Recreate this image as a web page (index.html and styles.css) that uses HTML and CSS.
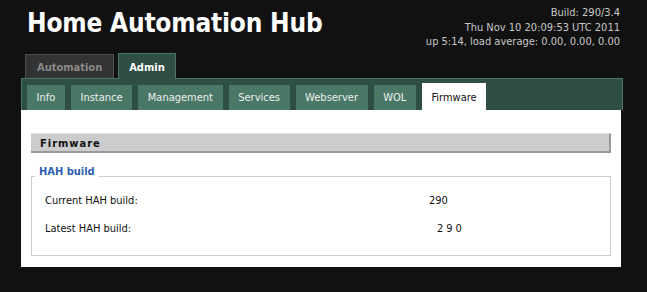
FILE: index.html
```html
<!DOCTYPE html>
<html>
<head>
<meta charset="utf-8">
<title>Home Automation Hub</title>
<link rel="stylesheet" href="styles.css">
</head>
<body>
<div class="wrap">
  <header class="header">
    <h1 class="title">Home Automation Hub</h1>
    <div class="info">
      <div>Build: 290/3.4</div>
      <div>Thu Nov 10 20:09:53 UTC 2011</div>
      <div>up 5:14, load average: 0.00, 0.00, 0.00</div>
    </div>
  </header>
  <nav class="tabs">
    <span class="tab">Automation</span>
    <span class="tab tab-active">Admin</span>
  </nav>
  <div class="subbar">
    <span class="subtab">Info</span>
    <span class="subtab">Instance</span>
    <span class="subtab">Management</span>
    <span class="subtab">Services</span>
    <span class="subtab">Webserver</span>
    <span class="subtab">WOL</span>
    <span class="subtab subtab-active">Firmware</span>
  </div>
  <main class="content">
    <div class="section-head">Firmware</div>
    <fieldset class="group">
      <legend class="group-title">HAH build</legend>
      <div class="row"><span class="label">Current HAH build:</span><span class="value">290</span></div>
      <div class="row"><span class="label">Latest HAH build:</span><span class="value value-latest">290</span></div>
    </fieldset>
  </main>
</div>
</body>
</html>
```
FILE: styles.css
```css
html, body {
  margin: 0;
  background: #111111;
}
body {
  font-family: "DejaVu Sans Condensed", "DejaVu Sans", sans-serif;
  font-stretch: condensed;
  font-size: 11px;
  color: #111;
}
.wrap {
  width: 602px;
  margin-left: 21px;
}
.header {
  display: flex;
  justify-content: space-between;
  height: 53px;
}
.title {
  margin: 0 0 0 6px;
  padding-top: 8px;
  font-size: 26px;
  line-height: 30px;
  font-weight: bold;
  letter-spacing: -0.2px;
  color: #ffffff;
}
.info {
  padding: 6px 3px 0 0;
  text-align: right;
  line-height: 14.7px;
  color: #c8c8c8;
}
.tabs {
  display: flex;
  align-items: flex-end;
  gap: 4px;
  padding-left: 4px;
  height: 25px;
}
.tab {
  box-sizing: border-box;
  padding: 6px 11px 4px;
  line-height: 13px;
  font-weight: bold;
  color: #8a8a8a;
  background: #333333;
  border: 1px solid #4f4f4f;
  border-bottom: none;
  height: 24px;
}
.tab-active {
  position: relative;
  z-index: 1;
  height: 26px;
  padding: 7px 10px 5px;
  margin-bottom: -1px;
  color: #ffffff;
  background: #2f4f44;
  border-color: #4e7565;
}
.subbar {
  display: flex;
  align-items: flex-end;
  gap: 6px;
  padding: 6px 0 0 5px;
  background: #2f4f44;
  border: 1px solid #4e7565;
  border-bottom: none;
}
.subtab {
  height: 25px;
  box-sizing: border-box;
  padding: 1px 9.6px 0;
  line-height: 24px;
  color: #eeeeee;
  background: #4a7867;
}
.subtab-active {
  height: 27px;
  padding-top: 3px;
  margin-top: -2px;
  color: #111111;
  background: #ffffff;
}
.content {
  width: 600px;
  box-sizing: border-box;
  background: #ffffff;
  padding: 23px 10px 11px;
}
.section-head {
  height: 20px;
  box-sizing: border-box;
  padding: 2px 0 0 9px;
  line-height: 15px;
  font-weight: bold;
  letter-spacing: 1px;
  color: #111;
  background: #cccccc;
  border-top: 1px solid #e2e2e2;
  border-right: 2px solid #999999;
  border-bottom: 2px solid #999999;
}
.group {
  margin: 13px 0 0;
  padding: 1px 13px 12px;
  border: 1px solid #cccccc;
  min-width: 0;
}
.group-title {
  margin-left: -10px;
  padding: 0 4px 8px;
  line-height: 12px;
  font-weight: bold;
  color: #2f5fb2;
}
.row {
  display: flex;
  line-height: 28px;
  color: #111;
}
.label {
  width: 384px;
}
.value-latest {
  padding-left: 8px;
  letter-spacing: 3px;
}
```
